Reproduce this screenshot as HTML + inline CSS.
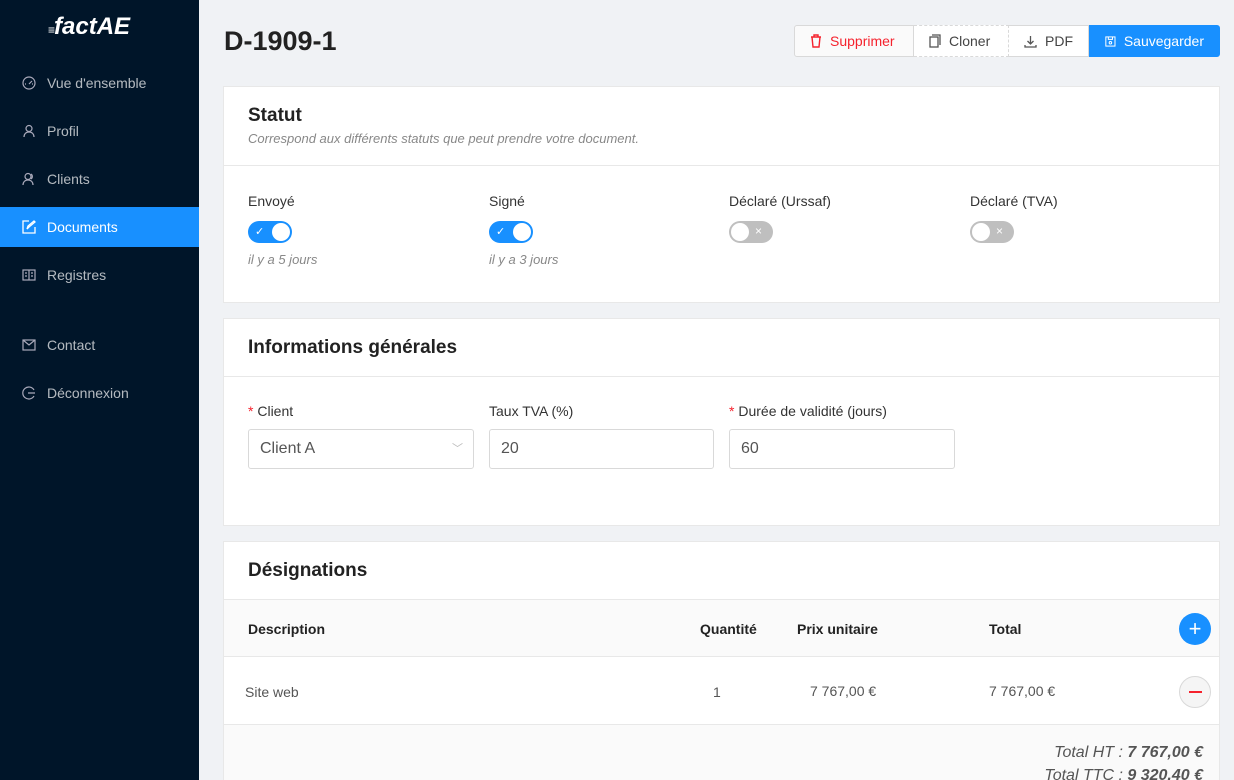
<!DOCTYPE html>
<html><head><meta charset="utf-8"><style>
*{box-sizing:border-box;margin:0;padding:0}
html,body{width:1234px;height:780px;overflow:hidden}
body{background:#f0f2f5;font-family:"Liberation Sans",sans-serif;color:#333;position:relative}
.sb{position:absolute;left:0;top:0;width:199px;height:780px;background:#001529}
.logo{position:absolute;left:48px;top:13px;color:#fff;font-size:24px;font-weight:bold;font-style:italic}
.nav{position:absolute;left:0;width:199px;height:40px;color:rgba(255,255,255,.7);font-size:14px;line-height:40px;padding-left:47px}
.nav svg{position:absolute;left:22px;top:13px}
.nav.on{background:#1890ff;color:#fff}
h1{position:absolute;left:224px;top:26px;font-size:27px;font-weight:bold;color:#222}
.btns{position:absolute;left:794px;top:25px;height:32px;display:flex;font-size:14px}
.b{height:32px;line-height:30px;border:1px solid #d9d9d9;background:#fff;padding:0 15px;display:flex;align-items:center;gap:8px;color:#444}
.card{position:absolute;left:223px;width:997px;background:#fff;border:1px solid #e8e8e8}
.ch{border-bottom:1px solid #e8e8e8;padding-left:24px}
.ct{font-size:19px;font-weight:bold;color:#222}
.lbl{position:absolute;font-size:14px;color:#333}
.sw{position:absolute;width:44px;height:22px;border-radius:11px}
.sw i{position:absolute;top:2px;width:18px;height:18px;border-radius:50%;background:#fff}
.it{position:absolute;font-size:13px;font-style:italic;color:#888}
.inp{position:absolute;top:110px;height:40px;border:1px solid #d9d9d9;border-radius:3px;font-size:16px;line-height:38px;padding-left:11px;color:#555;width:226px}
.req{color:#f5222d}
.th{position:absolute;font-size:14px;font-weight:bold;color:#222}
.td{position:absolute;font-size:14px;color:#555}
</style></head><body>
<div class="sb">
<div class="logo"><span style="font-size:12px;letter-spacing:-1px;font-style:normal">≡</span>factAE</div>
<div class="nav" style="top:63px"><svg width="14" height="14" viewBox="0 0 14 14" fill="none" stroke="#aab" stroke-width="1.2"><circle cx="7" cy="7" r="6"/><path d="M7 8l3-3M3 8h1M10 8h1"/></svg>Vue d'ensemble</div>
<div class="nav" style="top:111px"><svg width="14" height="14" viewBox="0 0 14 14" fill="none" stroke="#aab" stroke-width="1.2"><circle cx="7" cy="4.5" r="3"/><path d="M2 13c0-3 2-5 5-5s5 2 5 5"/></svg>Profil</div>
<div class="nav" style="top:159px"><svg width="14" height="14" viewBox="0 0 14 14" fill="none" stroke="#aab" stroke-width="1.2"><circle cx="6" cy="4.5" r="3"/><path d="M1 13c0-3 2-5 5-5s5 2 5 5M9 2a3 3 0 010 5"/></svg>Clients</div>
<div class="nav on" style="top:207px"><svg width="14" height="14" viewBox="0 0 14 14" fill="none" stroke="#fff" stroke-width="1.3"><path d="M7 1H1v12h12V7M5 9l1-3 6-5 1 1-6 5z"/></svg>Documents</div>
<div class="nav" style="top:255px"><svg width="14" height="14" viewBox="0 0 14 14" fill="none" stroke="#aab" stroke-width="1.2"><rect x="1" y="2" width="12" height="10"/><path d="M7 2v10M3 5h2M3 8h2M9 5h2M9 8h2"/></svg>Registres</div>
<div class="nav" style="top:325px"><svg width="14" height="14" viewBox="0 0 14 14" fill="none" stroke="#aab" stroke-width="1.2"><rect x="1" y="2" width="12" height="10"/><path d="M1 2l6 5 6-5"/></svg>Contact</div>
<div class="nav" style="top:373px"><svg width="14" height="14" viewBox="0 0 14 14" fill="none" stroke="#aab" stroke-width="1.2"><path d="M12 4A6 6 0 1012 10M6 7h7"/></svg>Déconnexion</div>
</div>
<h1>D-1909-1</h1>
<div class="btns">
<div class="b" style="color:#f5222d;border-radius:3px 0 0 3px;width:120px;background:#fafafa"><svg width="12" height="14" viewBox="0 0 12 14" fill="none" stroke="#f5222d" stroke-width="1.4"><path d="M1 3h10M4 3V1h4v2M2 3l1 10h6l1-10"/></svg>Supprimer</div>
<div class="b" style="border-style:dashed;border-left:none;width:95px"><svg width="12" height="14" viewBox="0 0 12 14" fill="none" stroke="#555" stroke-width="1.3"><rect x="1" y="3" width="8" height="10"/><path d="M3 1h8v10"/></svg>Cloner</div>
<div class="b" style="border-left:none;width:80px"><svg width="13" height="13" viewBox="0 0 13 13" fill="none" stroke="#555" stroke-width="1.3"><path d="M6.5 1v8M3.5 6l3 3 3-3M1 10v2h11v-2"/></svg>PDF</div>
<div class="b" style="background:#1890ff;border-color:#1890ff;color:#fff;border-radius:0 3px 3px 0;width:131px"><svg width="13" height="13" viewBox="0 0 13 13" fill="none" stroke="#fff" stroke-width="1.2"><rect x="1" y="1" width="11" height="11"/><path d="M4 1v3h5V1"/><circle cx="6.5" cy="8" r="1.5"/></svg>Sauvegarder</div>
</div>

<div class="card" style="top:86px;height:217px">
<div class="ch" style="height:79px;padding-top:18px"><div class="ct">Statut</div><div style="font-size:13px;font-style:italic;color:#888;margin-top:4px">Correspond aux différents statuts que peut prendre votre document.</div></div>
<div class="lbl" style="left:24px;top:106px">Envoyé</div>
<div class="sw" style="left:24px;top:134px;background:#1890ff"><span style="position:absolute;left:7px;top:4px;color:#fff;font-size:11px">✓</span><i style="left:24px"></i></div>
<div class="it" style="left:24px;top:165px">il y a 5 jours</div>
<div class="lbl" style="left:265px;top:106px">Signé</div>
<div class="sw" style="left:265px;top:134px;background:#1890ff"><span style="position:absolute;left:7px;top:4px;color:#fff;font-size:11px">✓</span><i style="left:24px"></i></div>
<div class="it" style="left:265px;top:165px">il y a 3 jours</div>
<div class="lbl" style="left:505px;top:106px">Déclaré (Urssaf)</div>
<div class="sw" style="left:505px;top:134px;background:#bfbfbf"><i style="left:2px"></i><span style="position:absolute;left:26px;top:3px;color:#fff;font-size:12px">×</span></div>
<div class="lbl" style="left:746px;top:106px">Déclaré (TVA)</div>
<div class="sw" style="left:746px;top:134px;background:#bfbfbf"><i style="left:2px"></i><span style="position:absolute;left:26px;top:3px;color:#fff;font-size:12px">×</span></div>
</div>

<div class="card" style="top:318px;height:208px">
<div class="ch" style="height:58px;padding-top:18px"><div class="ct">Informations générales</div></div>
<div class="lbl" style="left:24px;top:84px"><span class="req">* </span>Client</div>
<div class="lbl" style="left:265px;top:84px">Taux TVA (%)</div>
<div class="lbl" style="left:505px;top:84px"><span class="req">* </span>Durée de validité (jours)</div>
<div class="inp" style="left:24px">Client A<span style="position:absolute;right:10px;top:0;color:#bbb;font-size:11px">﹀</span></div>
<div class="inp" style="left:265px;width:225px">20</div>
<div class="inp" style="left:505px">60</div>
</div>

<div class="card" style="top:541px;height:250px">
<div class="ch" style="height:58px;padding-top:18px"><div class="ct">Désignations</div></div>
<div style="position:absolute;left:0;top:58px;width:995px;height:57px;background:#fafafa;border-bottom:1px solid #e8e8e8"></div>
<div class="th" style="left:24px;top:79px">Description</div>
<div class="th" style="left:476px;top:79px">Quantité</div>
<div class="th" style="left:573px;top:79px">Prix unitaire</div>
<div class="th" style="left:765px;top:79px">Total</div>
<div style="position:absolute;left:955px;top:71px;width:32px;height:32px;border-radius:50%;background:#1890ff;color:#fff;text-align:center;line-height:31px;font-size:22px">+</div>
<div class="td" style="left:21px;top:142px">Site web</div>
<div class="td" style="left:489px;top:142px">1</div>
<div class="td" style="left:586px;top:141px">7 767,00 €</div>
<div class="td" style="left:765px;top:141px">7 767,00 €</div>
<div style="position:absolute;left:955px;top:134px;width:32px;height:32px;border-radius:50%;background:#f5f5f5;border:1px solid #d9d9d9"><div style="position:absolute;left:9px;top:14px;width:13px;height:2px;background:#f5222d"></div></div>
<div style="position:absolute;left:0;top:182px;width:995px;height:80px;background:#fafafa;border-top:1px solid #e8e8e8"></div>
<div style="position:absolute;right:16px;top:202px;font-size:16px;font-style:italic;color:#555">Total HT : <b>7 767,00 €</b></div>
<div style="position:absolute;right:16px;top:225px;font-size:16px;font-style:italic;color:#555">Total TTC : <b>9 320,40 €</b></div>
</div>
</body></html>
